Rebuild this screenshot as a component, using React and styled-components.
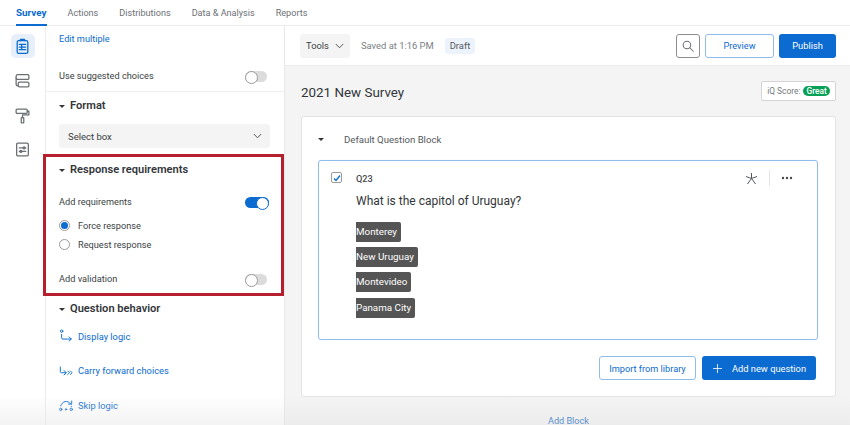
import React from "react";
import styled, { createGlobalStyle } from "styled-components";

const Global = createGlobalStyle`
  html, body { margin: 0; padding: 0; background: #fff; }
  body { font-family: Roboto, "Noto Sans", sans-serif; color: #32363a; }
  * { box-sizing: border-box; }
`;
const Page = styled.div`
  position: relative; width: 850px; height: 425px; overflow: hidden; display: flex; flex-direction: column; background: #fff;
  &::after { content: ""; position: absolute; left: 0; right: 0; bottom: 0; height: 30px;
    background: linear-gradient(to bottom, rgba(225,225,225,0), rgba(225,225,225,.4)); pointer-events: none; }
`;
const Tabs = styled.nav`
  height: 26px; flex: none; display: flex; gap: 21px; padding-left: 16px; border-bottom: 1px solid #ececec;
`;
const Tab = styled.div`
  height: 26px; padding-top: 7px; font-size: ${p => p.$active ? 9.9 : 9.1}px; line-height: 12px;
  color: ${p => p.$active ? "#0b6bd0" : "#6b7075"}; font-weight: ${p => p.$active ? 700 : 400};
  border-bottom: ${p => p.$active ? "2px solid #0b6bd0" : "none"};
`;
const Body = styled.div`flex: 1; display: flex; min-height: 0;`;
const Rail = styled.aside`
  width: 46px; flex: none; display: flex; flex-direction: column; align-items: center; padding: 8px 0 0 0; gap: 10.5px; border-right: 1px solid #ececec;
`;
const RailBtn = styled.div`
  width: 24px; height: 24px; display: flex; align-items: center; justify-content: center; border-radius: 5px;
  background: ${p => p.$active ? "#e6effa" : "transparent"}; color: ${p => p.$active ? "#0b6bd0" : "#6b6f73"};
`;
const Side = styled.section`
  width: 239px; flex: none; display: flex; flex-direction: column; border-right: 1px solid #e8e8e8; position: relative;
`;
const EditLink = styled.a`font-size: 9.2px; line-height: 12px; color: #0b6bd0; padding: 7px 0 0 13px; height: 43px;`;
const Row = styled.div`
  display: flex; justify-content: space-between; align-items: center; padding: 0 ${p => p.$pr || 17}px 0 13px; font-size: 9.2px; line-height: 12px; height: 14px; color: #3b3f43; margin-top: ${p => p.$mt || 0}px;
`;
const Divider = styled.div`height: 1px; background: #efefef; margin-top: 8px;`;
const SectionHead = styled.div`
  display: flex; align-items: center; gap: 5px; padding-left: 13px; font-size: 11.1px; font-weight: 600; line-height: 14px; color: #32363a; height: 14px; margin-top: ${p => p.$mt || 0}px;
`;
const Caret = styled.span`
  width: 0; height: 0; border-left: 3.5px solid transparent; border-right: 3.5px solid transparent; border-top: 3.5px solid #32363a;
`;
const Toggle = styled.span`
  position: relative; display: block; width: ${p => p.$on ? 24 : 22}px; height: 11px; border-radius: 6px; background: ${p => p.$on ? "#0b6bd0" : "#dcdcdc"};
  &::after { content: ""; position: absolute; top: 0; ${p => p.$on ? "right: 0;" : "left: 0;"} width: 11px; height: 11px; border-radius: 50%; background: #fff; border: 1px solid ${p => p.$on ? "#0b6bd0" : "#9a9a9a"}; }
`;
const SelectBox = styled.div`
  margin: 11px 13px 0 13px; height: 24px; width: 211px; background: #f4f4f4; border-radius: 3px; display: flex; align-items: center; justify-content: space-between; padding: 0 8px 0 9px; font-size: 9.5px; color: #3b3f43;
`;
const Highlight = styled.div`
  margin: 6px 0 0 -3px; width: 241px; height: 142px; border: 3px solid #b5202f; padding: 6px 0 0 0; background: #fff; position: relative;
`;
const RadioList = styled.div`display: flex; flex-direction: column; gap: 6px; margin-top: 10px; padding-left: 13px;`;
const RadioRow = styled.div`display: flex; align-items: center; gap: 8px; font-size: 9.2px; line-height: 13px; height: 13px; color: #3b3f43;`;
const Radio = styled.span`
  width: 11px; height: 11px; border-radius: 50%; border: 1px solid #9a9a9a; background: #fff; display: flex; align-items: center; justify-content: center;
  &::after { content: ""; width: 7px; height: 7px; border-radius: 50%; background: ${p => p.$on ? "#0b6bd0" : "transparent"}; }
`;
const LogicList = styled.div`display: flex; flex-direction: column; margin-top: 3px;`;
const LogicLink = styled.a`
  display: flex; align-items: center; gap: 5px; padding-left: 13px; height: 34.5px; font-size: 9.3px; color: #0b6bd0;
`;
const Main = styled.main`flex: 1; display: flex; flex-direction: column; min-width: 0;`;
const Toolbar = styled.div`
  height: 40px; flex: none; display: flex; align-items: center; padding: 0 14px 0 15px; border-bottom: 1px solid #ececec;
`;
const ToolsBtn = styled.div`
  width: 50px; height: 24px; background: #f4f4f4; border-radius: 3px; display: flex; align-items: center; justify-content: center; gap: 6px; font-size: 9.3px; color: #3b3f43;
`;
const Saved = styled.span`font-size: 9.4px; color: #7a7e82; margin-left: 11px;`;
const Draft = styled.span`font-size: 9.4px; color: #55595d; background: #ecf3fc; border-radius: 3px; padding: 0 5px; height: 16px; line-height: 16px; margin-left: 11px;`;
const Spacer = styled.div`flex: 1;`;
const SearchBtn = styled.div`
  width: 24px; height: 24px; border: 1px solid #8d8d8d; border-radius: 3px; display: flex; align-items: center; justify-content: center; margin-right: 5px; color: #6b6f73;
`;
const OutlineBtn = styled.div`
  height: 24px; width: ${p => p.$w}px; border: 1px solid #8fbcec; border-radius: 3px; color: #0b6bd0; font-size: 9.2px; display: flex; align-items: center; justify-content: center; background: #fff;
`;
const PrimaryBtn = styled.div`
  height: 24px; width: ${p => p.$w}px; border-radius: 3px; background: #0b6bd0; color: #fff; font-size: 9.3px; display: flex; align-items: center; justify-content: center; gap: 9px; margin-left: ${p => p.$ml}px;
`;
const Canvas = styled.div`flex: 1; background: #f4f4f4; padding: 0 14px 0 16px; min-height: 0; display: flex; flex-direction: column;`;
const TitleRow = styled.div`height: 50px; flex: none; display: flex; align-items: center; justify-content: space-between;`;
const Title = styled.h1`margin: 0; font-size: 13.4px; font-weight: 400; color: #32363a; padding-top: 3px;`;
const Score = styled.div`
  width: 75px; height: 20px; border: 1px solid #d4d4d4; border-radius: 2px; background: #fff; display: flex; align-items: center; justify-content: center; gap: 3px; font-size: 8.4px; color: #75797d;
`;
const Great = styled.span`background: #07a057; color: #fff; border-radius: 6px; padding: 0 3px; height: 10px; line-height: 10px; font-weight: 500;`;
const BlockCard = styled.div`
  width: 535px; height: 281px; flex: none; background: #fff; border: 1px solid #e3e3e3; border-radius: 3px; padding: 0 17px 0 16px; display: flex; flex-direction: column;
`;
const BlockHead = styled.div`
  height: 43px; flex: none; display: flex; align-items: center; gap: 20px; padding-top: 2px; font-size: 9.6px; color: #55595d;
`;
const QCard = styled.div`
  width: 500px; height: 180px; flex: none; border: 1px solid #8fbcec; border-radius: 3px; padding: 10px 0 0 12px; display: flex; gap: 14px; box-shadow: 0 0 1px #cfe2f7;
`;
const CheckBox = styled.span`
  width: 11px; height: 11px; margin-top: 1px; flex: none; border: 1px solid #9a9a9a; border-radius: 2px; display: flex; align-items: center; justify-content: center; color: #0b6bd0;
`;
const QBody = styled.div`flex: 1; display: flex; flex-direction: column; align-items: flex-start;`;
const QHead = styled.div`
  width: 100%; display: flex; align-items: center; height: 14px; font-size: 9.2px; font-weight: 500; color: #45494d; padding-right: 24px;
`;
const QActions = styled.div`margin-left: auto; display: flex; align-items: center; gap: 11px;`;
const VRule = styled.span`width: 1px; height: 16px; background: #e4e4e4;`;
const QText = styled.p`margin: 8px 0 12px; font-size: 12px; line-height: 17px; color: #32363a;`;
const Choices = styled.div`display: flex; flex-direction: column; gap: 5.2px; align-items: flex-start;`;
const Choice = styled.div`
  height: 20px; padding: 0 4px 0 0; background: #555; color: #fff; font-size: 9.8px; line-height: 20px; border-radius: 0 2px 2px 0;
`;
const BlockFoot = styled.div`display: flex; justify-content: flex-end; padding: 16px 2px 0 0;`;
const AddBlock = styled.a`
  align-self: flex-start; margin: 18px 0 0 247px; font-size: 9.1px; line-height: 12px; color: #0b66c4;
`;

const Svg = ({ s = 16, children, sw = 1.2 }) => (
  <svg width={s} height={s} viewBox="0 0 16 16" fill="none" stroke="currentColor" strokeWidth={sw} strokeLinecap="round" strokeLinejoin="round">{children}</svg>
);
const Chevron = () => <svg width="9" height="6" viewBox="0 0 9 6" fill="none" stroke="#55595d" strokeWidth="1"><path d="M.8 1 4.500 4.800 8.200 1" /></svg>;

export default function App() {
  return (
    <Page>
      <Global />
      <Tabs>
        <Tab $active>Survey</Tab><Tab>Actions</Tab><Tab>Distributions</Tab><Tab>Data &amp; Analysis</Tab><Tab>Reports</Tab>
      </Tabs>
      <Body>
        <Rail>
          <RailBtn $active><Svg s={17}><rect x="3" y="2.500" width="10" height="12" rx="1.500" /><path d="M6 2.500V1.400h4v1.100M5 6h6M5 8.500h6M5 11h6M7.200 6v5" /></Svg></RailBtn>
          <RailBtn><Svg s={17}><path d="M3.500 2.500H13a1 1 0 0 1 1 1V6a1 1 0 0 1-1 1H3.500a1.500 1.500 0 0 1-1.500-1.500V4a1.500 1.500 0 0 1 1.500-1.500Z" /><path d="M2 5.500v6A1.500 1.500 0 0 0 3.500 13M5 9.500h8a1 1 0 0 1 1 1V13a1 1 0 0 1-1 1H5a1 1 0 0 1-1-1v-2.500a1 1 0 0 1 1-1Z" /></Svg></RailBtn>
          <RailBtn><Svg s={17}><rect x="2" y="2" width="10.500" height="4" rx="1" /><path d="M12.500 4H14v3.500H8V10" /><rect x="6.800" y="10" width="2.400" height="5" rx=".6" /></Svg></RailBtn>
          <RailBtn><Svg s={17}><rect x="2.500" y="2" width="11" height="12" rx="1" /><path d="M5 6.500h6M5 9.800h6" /><circle cx="9.500" cy="6.500" r=".9" /><circle cx="6.500" cy="9.800" r=".9" /></Svg></RailBtn>
        </Rail>
        <Side>
          <EditLink>Edit multiple</EditLink>
          <Row><span>Use suggested choices</span><Toggle /></Row>
          <Divider />
          <SectionHead $mt={7}><Caret />Format</SectionHead>
          <SelectBox>Select box<Chevron /></SelectBox>
          <Highlight>
            <SectionHead><Caret />Response requirements</SectionHead>
            <Row $mt={18} $pr={12}><span>Add requirements</span><Toggle $on /></Row>
            <RadioList>
              <RadioRow><Radio $on />Force response</RadioRow>
              <RadioRow><Radio />Request response</RadioRow>
            </RadioList>
            <Row $mt={21} $pr={14}><span>Add validation</span><Toggle /></Row>
          </Highlight>
          <SectionHead $mt={6}><Caret />Question behavior</SectionHead>
          <LogicList>
            <LogicLink><Svg s={14} sw={1.100}><circle cx="3" cy="2.500" r="1.400" /><path d="M3 6v4a1.500 1.500 0 0 0 1.500 1.500H14M11.500 9l2.500 2.500L11.500 14" /></Svg>Display logic</LogicLink>
            <LogicLink><Svg s={14} sw={1.100}><path d="M1.500 3.500v5a1.500 1.500 0 0 0 1.500 1.500H8M5.800 7.500 8.300 10l-2.500 2.500M10 8l2 2-2 2M13 8l2 2-2 2" /></Svg>Carry forward choices</LogicLink>
            <LogicLink><Svg s={14} sw={1.100}><circle cx="2" cy="13" r="1.400" /><circle cx="8" cy="13" r=".8" /><circle cx="14" cy="13" r="1.400" /><path d="M2 9C3 4 10 1.500 13.500 7M14.500 3.500v3.500H11M14 9.500v.3" /></Svg>Skip logic</LogicLink>
          </LogicList>
        </Side>
        <Main>
          <Toolbar>
            <ToolsBtn>Tools<Chevron /></ToolsBtn>
            <Saved>Saved at 1:16 PM</Saved>
            <Draft>Draft</Draft>
            <Spacer />
            <SearchBtn><Svg s={14}><circle cx="6.800" cy="6.800" r="4.300" /><path d="m10 10 4 4" /></Svg></SearchBtn>
            <OutlineBtn $w={69}>Preview</OutlineBtn>
            <PrimaryBtn $w={57} $ml={5}>Publish</PrimaryBtn>
          </Toolbar>
          <Canvas>
            <TitleRow><Title>2021 New Survey</Title><Score>iQ Score: <Great>Great</Great></Score></TitleRow>
            <BlockCard>
              <BlockHead><Caret />Default Question Block</BlockHead>
              <QCard>
                <CheckBox><svg width="8" height="8" viewBox="0 0 8 8" fill="none" stroke="currentColor" strokeWidth="1.300"><path d="M1 4.500 3 6.500 7 1.500" /></svg></CheckBox>
                <QBody>
                  <QHead>Q23
                    <QActions>
                      <svg width="13" height="13" viewBox="0 0 13 13" fill="none" stroke="#55595d" strokeWidth="1"><path d="M6.500 1v5.500L2.500 12M6.500 6.500l4 5.500M1 4.500l5.500 2L12 4.500" /></svg>
                      <VRule />
                      <svg width="12" height="4" viewBox="0 0 12 4" fill="#45494d"><circle cx="2" cy="2" r="1.200" /><circle cx="6" cy="2" r="1.200" /><circle cx="10" cy="2" r="1.200" /></svg>
                    </QActions>
                  </QHead>
                  <QText>What is the capitol of Uruguay?</QText>
                  <Choices>
                    <Choice>Monterey</Choice><Choice>New Uruguay</Choice><Choice>Montevideo</Choice><Choice>Panama City</Choice>
                  </Choices>
                </QBody>
              </QCard>
              <BlockFoot>
                <OutlineBtn $w={97}>Import from library</OutlineBtn>
                <PrimaryBtn $w={114} $ml={6}><Svg s={11}><path d="M8 2v12M2 8h12" /></Svg>Add new question</PrimaryBtn>
              </BlockFoot>
            </BlockCard>
            <AddBlock>Add Block</AddBlock>
          </Canvas>
        </Main>
      </Body>
    </Page>
  );
}
